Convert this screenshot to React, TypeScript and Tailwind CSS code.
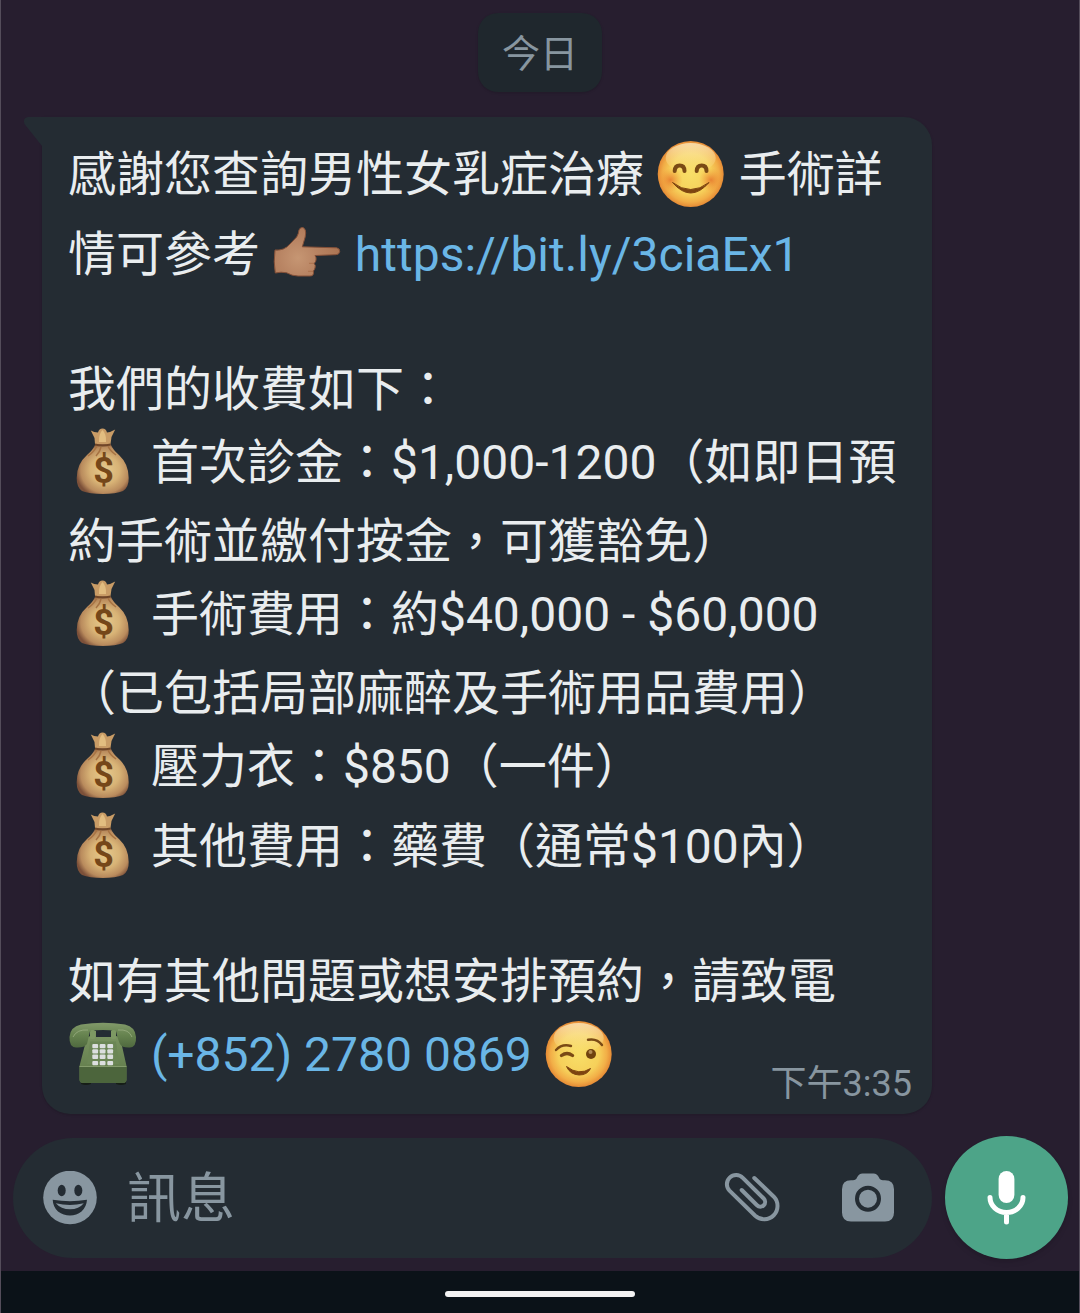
import type { ReactNode } from "react";

function Emoji({ label, children }: { label: string; children: ReactNode }) {
  return (
    <svg
      role="img"
      aria-label={label}
      viewBox="0 2 71 80"
      className="inline-block h-20 w-[71px] align-middle"
    >
      {children}
    </svg>
  );
}

function FaceBase({ id }: { id: string }) {
  return (
    <>
      <defs>
        <radialGradient id={`${id}-skin`} cx="50%" cy="50%" r="50%">
          <stop offset="0" stopColor="#f8df68" />
          <stop offset="0.62" stopColor="#f6d05a" />
          <stop offset="0.85" stopColor="#f2ae47" />
          <stop offset="1" stopColor="#e58a35" />
        </radialGradient>
        <linearGradient id={`${id}-shine`} x1="0" y1="0" x2="0" y2="1">
          <stop offset="0" stopColor="#fbe8c0" stopOpacity="0.8" />
          <stop offset="1" stopColor="#fff0a0" stopOpacity="0" />
        </linearGradient>
        <radialGradient id={`${id}-cheek`}>
          <stop offset="0" stopColor="#e5702a" stopOpacity="0.8" />
          <stop offset="1" stopColor="#f09030" stopOpacity="0" />
        </radialGradient>
      </defs>
      <circle cx="34.7" cy="38" r="33" fill={`url(#${id}-skin)`} />
      <ellipse cx="34.7" cy="22" rx="25" ry="15" fill={`url(#${id}-shine)`} />
    </>
  );
}

function Smile() {
  return (
    <Emoji label="😊">
      <FaceBase id="smile" />
      <circle cx="14.5" cy="44" r="12" fill="url(#smile-cheek)" />
      <circle cx="55" cy="44" r="12" fill="url(#smile-cheek)" />
      <g fill="none" stroke="#7a4a15" strokeLinecap="round">
        <path d="M18.700 35Q19 29.500 23.700 29.500T28.500 35" strokeWidth="4" />
        <path d="M40.700 35Q41 29.500 45.700 29.500T50.500 35" strokeWidth="4" />
      </g>
      <path d="M16.500 46.500Q34.700 60.500 53 46.500Q34.700 67.500 16.500 46.500Z" fill="#7d4410" stroke="#7d4410" strokeLinejoin="round" />
    </Emoji>
  );
}

function Wink() {
  return (
    <Emoji label="😉">
      <FaceBase id="wink" />
      <g fill="none" stroke="#7a4a15" strokeLinecap="round" strokeWidth="2.4">
        <path d="M12 34Q18 27.500 27 30" />
        <path d="M44 23.800Q53 22 58 29" />
        <path d="M17.500 39.500Q23 35.500 28.500 39.500" strokeWidth="3.4" />
      </g>
      <circle cx="47" cy="38" r="5" fill="#70420f" />
      <circle cx="46.500" cy="36" r="2" fill="#b28a54" />
      <path d="M22.500 50.500Q35 60 46.500 52.500Q43.500 59 35 59Q26 58.500 22.500 50.500Z" fill="#7d4410" stroke="#7d4410" strokeLinejoin="round" />
    </Emoji>
  );
}

function PointRight() {
  return (
    <Emoji label="👉🏽">
      <defs>
        <radialGradient id="hand" gradientUnits="userSpaceOnUse" cx="26" cy="42" r="42">
          <stop offset="0" stopColor="#c69673" />
          <stop offset="0.45" stopColor="#b88463" />
          <stop offset="1" stopColor="#ac7553" />
        </radialGradient>
      </defs>
      <path
        d="M3 34Q7 34.500 11.300 33Q15 31.500 18 28L24.700 21Q26.500 18 27 14Q28 11 31 11.500Q34 13 33.700 17Q33.500 21 32 25L30.300 30.800L64.700 31.800Q68 32.500 67.700 35.500Q67.500 38.500 64 38.700L43 39.500Q44.500 41.500 44 44Q43.800 46.500 42 47.500Q44 49 43 52Q42.500 54 41.300 55Q42.500 60 38 60H26Q20 60 14.700 56.800Q9 55.500 3.300 57Q1.300 46 3 34Z"
        fill="url(#hand)"
        stroke="#845038"
        strokeWidth="1"
      />
      <path d="M37 47.300H42M36 55.300H41" fill="none" stroke="#a76b46" strokeWidth="0.8" />
    </Emoji>
  );
}

function MoneyBag() {
  return (
    <Emoji label="💰">
      <defs>
        <radialGradient id="bag" cx="54%" cy="52%" r="56%">
          <stop offset="0" stopColor="#e6ca8d" />
          <stop offset="0.5" stopColor="#d8b376" />
          <stop offset="0.82" stopColor="#b98b5d" />
          <stop offset="1" stopColor="#7c5039" />
        </radialGradient>
      </defs>
      <path
        d="M27.500 20L42.500 20Q45 26 51 31Q60.700 40 60.700 54Q61 63 55 67Q48 70 34.700 70T14 67Q8.500 63 8.700 54Q8.700 40 19 31Q25 26 27.500 20Z"
        fill="url(#bag)"
      />
      <path d="M27 20L26.500 14L22.800 6.500Q26 8.500 30 8.500Q31 4.500 34.500 4.500T39 8.500Q43 8 47.200 5.500L43.500 13L42.500 20Z" fill="#c99c66" />
      <path d="M31 18Q30.500 10 34.500 6Q38.500 10 38 18Z" fill="#e2bd80" />
      <path d="M27 20.500Q34.500 22.500 42.500 20.500" fill="none" stroke="#704628" strokeWidth="2" />
      <path d="M29 22Q26 28 20 32M33 23Q32 28 28 32M40 22Q42 27 48 31" fill="none" stroke="#a77343" strokeWidth="1.5" />
      <text x="35.500" y="59" textAnchor="middle" fill="#754719" className="font-['Roboto'] text-[36px] font-bold">
        $
      </text>
    </Emoji>
  );
}

function Telephone() {
  return (
    <Emoji label="☎️">
      <defs>
        <linearGradient id="handset" x1="0" y1="0" x2="0" y2="1">
          <stop offset="0" stopColor="#829a6a" />
          <stop offset="0.5" stopColor="#66834f" />
          <stop offset="1" stopColor="#4f693f" />
        </linearGradient>
        <linearGradient id="phone" x1="0" y1="0" x2="0" y2="1">
          <stop offset="0" stopColor="#7c9663" />
          <stop offset="1" stopColor="#5c7747" />
        </linearGradient>
      </defs>
      <g transform="translate(0 -3)">
        <path d="M13 67h10v4q-5 2-10 0ZM48 67h10v4q-5 2-10 0Z" fill="#161d17" />
        <path d="M19 24L23 23V18H28V24H43V18H48V23L52 24L58.500 53V67Q58 70 55 70H15Q12 70 11.500 67V53Z" fill="url(#phone)" />
        <path d="M11.500 53H58.500V67Q58 70 55 70H15Q12 70 11.500 67Z" fill="#4c653c" />
        <path d="M11.500 53.500H58.500" stroke="#849c6c" />
        <path
          d="M1.500 24Q2 14 13 11.500Q35 8 57 11.500Q67.500 14 68 24Q68.500 34 62 34.500Q54 35 52 31Q50 27 48 18Q35 16 22 18Q20 27 19 31Q16 35 8 34.500Q1 34 1.500 24Z"
          fill="url(#handset)"
        />
        <path d="M5 24Q9 16 20 17M64 24Q61 16 50 17" fill="none" stroke="#91a779" />
        <rect x="22" y="17" width="5" height="9" rx="1.500" fill="#7d9963" />
        <rect x="43" y="17" width="5" height="9" rx="1.500" fill="#7d9963" />
        <path d="M22 28.500H48L51 51H19Z" fill="#6b8655" />
        {[31, 36.2, 41.6, 48].map((y) =>
          [24.3, 31.7, 39.3].map((x) => (
            <rect key={`${x}-${y}`} x={x} y={y} width="5.800" height="4.300" rx="1" fill="#dcdfdf" />
          ))
        )}
      </g>
    </Emoji>
  );
}

function EmojiIcon() {
  return (
    <svg viewBox="0 0 54 54" className="h-[54px] w-[54px]" aria-hidden="true">
      <circle cx="27" cy="26.500" r="26.800" fill="#8896a0" />
      <g fill="#242c33">
        <ellipse cx="18.700" cy="19.500" rx="4" ry="5.800" />
        <ellipse cx="35.300" cy="19.500" rx="4" ry="5.800" />
        <path d="M9.700 28.800Q27 31.500 44 28.800Q43.500 36 38.500 40.500Q33.500 44.500 27 44.500T15 40.500Q10 36 9.700 28.800Z" />
      </g>
      <path d="M12.800 32.300Q27 35.800 40.800 32.300Q36 38.300 27 38.300T12.800 32.300Z" fill="#8896a0" />
    </svg>
  );
}

function ClipIcon() {
  return (
    <svg viewBox="0 0 56 52" className="h-[52px] w-14" aria-hidden="true">
      <path
        d="M30.300 6L49.800 24.700A13.300 13.300 0 0 1 31.200 43.700L5.500 18.700A9.200 9.200 0 0 1 18.800 5.800L39.700 26.500A4.700 4.700 0 0 1 33 33.300L17.700 18"
        fill="none"
        stroke="#8896a0"
        strokeWidth="4"
        strokeLinecap="round"
      />
    </svg>
  );
}

function CameraIcon() {
  return (
    <svg viewBox="0 0 52 50" className="h-[50px] w-[52px]" aria-hidden="true">
      <path
        d="M9 7.300H11Q14 7.300 15 4.500Q17 0.500 20.500 0.500H31.500Q35 0.500 37 4.500Q38 7.300 41 7.300H43Q52 7.300 52 16.300V39.500Q52 48.500 43 48.500H9Q0 48.500 0 39.500V16.300Q0 7.300 9 7.300Z"
        fill="#8896a0"
      />
      <circle cx="26" cy="25.700" r="11" fill="none" stroke="#242c33" strokeWidth="4" />
    </svg>
  );
}

function MicIcon() {
  return (
    <svg viewBox="0 0 39 54" className="h-[54px] w-[39px]" aria-hidden="true">
      <rect x="11.600" y="0" width="15.800" height="32" rx="7.900" fill="#fff" />
      <path d="M3 26.500A16.500 15 0 0 0 36 26.500M19.500 41.500V51" fill="none" stroke="#fff" strokeWidth="5" strokeLinecap="round" />
    </svg>
  );
}

export default function App() {
  return (
    <div className="flex min-h-screen flex-col border-x border-[#544d5a] bg-[#271e2f] font-['Roboto','Noto_Sans_CJK_TC',sans-serif]">
      <main className="flex flex-1 flex-col px-3 pt-[13px]">
        <div className="self-center rounded-[20px] bg-[#1f272d] px-6 pt-[13px] pb-2.5 text-[38px] leading-14 text-[#8896a0] shadow-sm">
          今日
        </div>

        <article className="relative mt-[25px] mr-[135px] ml-[29px] rounded-[28px] rounded-tl-none bg-[#242c33] px-[26px] pt-[21px] pb-4 text-[48px] leading-[72px] text-[#e9edef] shadow-sm">
          <svg viewBox="0 0 20 30" className="absolute top-0 -left-[18px] h-[30px] w-5" aria-hidden="true">
            <path d="M20 0H4Q-1.500 1 0.500 7L18 29H20Z" fill="#242c33" />
          </svg>

          <p>
            感謝您查詢男性女乳症治療 <Smile /> 手術詳情可參考 <PointRight />{" "}
            <a href="https://bit.ly/3ciaEx1" className="text-[#6ab6e6]">
              https://bit.ly/3ciaEx1
            </a>
          </p>

          <div className="mt-14">
            <p>我們的收費如下：</p>
            <p>
              <MoneyBag /> 首次診金：$1,000-1200（如即日預約手術並繳付按金，可獲豁免）
            </p>
            <p>
              <MoneyBag /> 手術費用：約$40,000 - $60,000（已包括局部麻醉及手術用品費用）
            </p>
            <p>
              <MoneyBag /> 壓力衣：$850（一件）
            </p>
            <p>
              <MoneyBag /> 其他費用：藥費（通常$100內）
            </p>
          </div>

          <p className="mt-14">如有其他問題或想安排預約，請致電</p>
          <div className="flex items-end justify-between">
            <p>
              <Telephone />{" "}
              <a href="tel:+85227800869" className="text-[#6ab6e6]">
                (+852) 2780 0869
              </a>{" "}
              <Wink />
            </p>
            <time className="-mr-1.5 -mb-1.5 text-[36px] leading-10 text-[#8896a0]">下午3:35</time>
          </div>
        </article>

        <form className="mt-auto flex items-center gap-[13px] pb-3" onSubmit={(e) => e.preventDefault()}>
          <div className="flex h-[120px] min-w-0 flex-1 items-center rounded-full bg-[#242c33] pr-[38px] pl-[30px]">
            <button type="button" aria-label="表情符號" className="shrink-0">
              <EmojiIcon />
            </button>
            <input
              type="text"
              aria-label="訊息"
              placeholder="訊息"
              className="ml-[30px] h-20 min-w-0 flex-1 bg-transparent pt-1 text-[54px] text-[#e9edef] outline-none placeholder:text-[#8896a0]"
            />
            <button type="button" aria-label="附件" className="shrink-0">
              <ClipIcon />
            </button>
            <button type="button" aria-label="相機" className="ml-[62px] shrink-0">
              <CameraIcon />
            </button>
          </div>
          <button
            type="button"
            aria-label="語音訊息"
            className="-mr-px grid h-[123px] w-[123px] shrink-0 place-items-center rounded-full bg-[#4da488] shadow-md"
          >
            <MicIcon />
          </button>
        </form>
      </main>

      <footer className="flex h-[42px] items-center justify-center bg-[#0b1218] pt-1">
        <div className="h-1.5 w-[190px] rounded-full bg-[#f2f2f2]" />
      </footer>
    </div>
  );
}
